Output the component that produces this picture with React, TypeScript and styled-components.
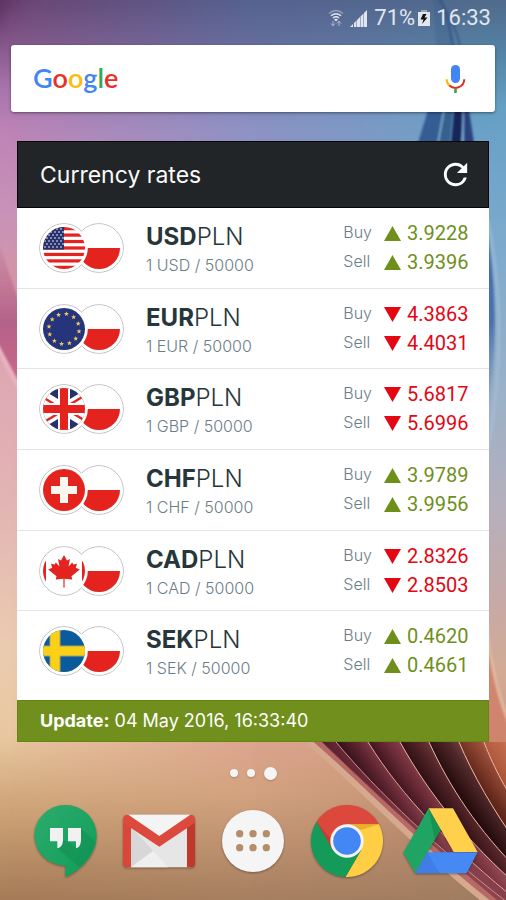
import React from "react";
import styled, { createGlobalStyle } from "styled-components";

const GlobalStyle = createGlobalStyle`
  *, *::before, *::after { box-sizing: border-box; }
  body { margin: 0; font-family: Inter, "Open Sans", sans-serif; }
  button { border: 0; padding: 0; background: none; cursor: pointer; }
  ul, dl, dd, h1, h2, p { margin: 0; padding: 0; }
`;

const GREEN = "#6f8f1b";
const RED = "#e30613";
const FLAG_RED = "#e5231e";

/* ---------- layout ---------- */

const Screen = styled.div`
  position: relative;
  z-index: 0;
  display: flex;
  flex-direction: column;
  min-height: 100vh;
  overflow: hidden;
  background: #e0b0a8;
`;

const WallpaperSvg = styled.svg`
  position: absolute;
  inset: 0;
  z-index: -1;
  width: 100%;
  height: 100%;
`;

const StatusBar = styled.header`
  display: flex;
  align-items: center;
  justify-content: flex-end;
  height: 36px;
  margin-bottom: 9px;
  padding-right: 15px;
  color: #e1e6ee;
  font: 22px/36px Roboto, sans-serif;
`;

const StatusIcon = styled.svg<{ $gap: number }>`
  display: block;
  flex: none;
  margin-right: ${(p) => p.$gap}px;
`;

const Percent = styled.span`
  margin-right: 3px;
`;

const SearchBar = styled.form`
  display: flex;
  align-items: center;
  height: 67px;
  margin: 0 11px 29px;
  padding: 0 27px 0 22px;
  border-radius: 3px;
  background: #fff;
  box-shadow: 0 1px 3px rgba(0, 0, 0, 0.45);
`;

const Logo = styled.label`
  padding-bottom: 2px;
  font: 600 27px/40px Lato, sans-serif;
`;

const LogoLetter = styled.span<{ $color: string }>`
  color: ${(p) => p.$color};
`;

const SearchInput = styled.input`
  flex: 1;
  min-width: 0;
  height: 40px;
  padding: 0 12px;
  border: 0;
  outline: 0;
  background: transparent;
  font: 18px/24px Roboto, sans-serif;
`;

const IconButton = styled.button`
  display: block;
  flex: none;
  svg { display: block; }
`;

const Widget = styled.main`
  display: flex;
  flex: 1;
  flex-direction: column;
  margin: 0 17px;
  background: #fff;
`;

const WidgetHeader = styled.div`
  display: flex;
  align-items: center;
  justify-content: space-between;
  height: 67px;
  padding: 0 15px 0 22px;
  border: 1px solid #050606;
  background: #212527;
`;

const WidgetTitle = styled.h1`
  color: #fafafa;
  font-size: 23px;
  font-weight: 400;
  line-height: 32px;
`;

const RateList = styled.ul`
  display: flex;
  flex: 1;
  flex-direction: column;
  padding-bottom: 8px;
  list-style: none;
`;

const RateRow = styled.li`
  display: flex;
  flex: 1;
  align-items: center;
  padding: 0 22px;
  border-bottom: 1px solid #e2e4e6;
  &:last-child { border-color: transparent; }
`;

const FlagPair = styled.svg`
  flex: none;
  margin-right: 21px;
`;

const PairInfo = styled.div`
  flex: 1;
  padding-top: 2px;
`;

const PairName = styled.h2`
  color: #26363a;
  font-size: 24px;
  font-weight: 300;
  line-height: 32px;
  strong { font-weight: 700; }
`;

const PairUnits = styled.p`
  color: #6b7d86;
  font-size: 16px;
  font-weight: 300;
  line-height: 24px;
`;

const Quotes = styled.dl`
  display: grid;
  grid-template-columns: auto 17px 60px;
  column-gap: 6px;
  align-items: center;
  line-height: 29px;
`;

const QuoteLabel = styled.dt`
  align-self: start;
  margin-right: 6px;
  color: #6b7d86;
  font-size: 16px;
  font-weight: 300;
  line-height: 27px;
`;

const QuoteValue = styled.dd<{ $up: boolean }>`
  color: ${(p) => (p.$up ? GREEN : RED)};
  font: 20px/29px Roboto, sans-serif;
`;

const UpdateBar = styled.footer`
  height: 42px;
  padding: 0 22px;
  border: 1px solid #658416;
  background: #708f1c;
  color: #fff;
  font-size: 18px;
  line-height: 40px;
  strong { font-weight: 700; }
`;

const Pager = styled.nav`
  display: flex;
  align-items: center;
  justify-content: center;
  gap: 9px;
  height: 62px;
  margin-bottom: -1px;
`;

const PageDot = styled.button<{ $active?: boolean }>`
  width: ${(p) => (p.$active ? 13 : 8)}px;
  height: ${(p) => (p.$active ? 13 : 8)}px;
  border-radius: 50%;
  background: #f5f5f5;
  box-shadow: 0 1px 2px rgba(0, 0, 0, 0.2);
`;

const Dock = styled.nav`
  display: grid;
  grid-template-columns: repeat(5, 1fr);
  justify-items: center;
  padding: 0 18px 21px;
`;

const AppIcon = styled.svg`
  filter: drop-shadow(0 1px 1px rgba(0, 0, 0, 0.35));
`;

/* ---------- wallpaper ---------- */

const BLADES = [
  { x: 322, d: "M322 742 C370 788 440 854 520 918", dark: "#4a1626", mid: "#6d2b3a", light: "#8d444c", edge: "#8a4048" },
  { x: 336, d: "M336 742 C376 790 440 852 520 912", dark: "#1d050b", mid: "#5c2330", light: "#86404b", edge: "#c98f86" },
  { x: 368, d: "M368 742 C402 797 452 848 520 903", dark: "#2a0a12", mid: "#6d2c38", light: "#8f454e", edge: "#dca79b" },
  { x: 400, d: "M400 742 C430 796 468 842 520 888", dark: "#22080c", mid: "#55262a", light: "#7c4546", edge: "#e6b5a8" },
  { x: 429, d: "M429 742 C450 788 478 830 520 872", dark: "#200809", mid: "#50282a", light: "#7d4c49", edge: "#e8b8aa" },
  { x: 459, d: "M459 742 C473 775 492 808 520 848", dark: "#5d2418", mid: "#984c38", light: "#c5795e", edge: "#eab9a4" },
  { x: 484, d: "M484 742 C490 758 500 780 520 812", dark: "#a85336", mid: "#c26d4e", light: "#d28464", edge: "#eab9a4" },
];

const Wallpaper = () => (
  <WallpaperSvg viewBox="0 0 506 900" preserveAspectRatio="none" aria-hidden="true">
    <defs>
      <linearGradient id="wpLeft" x1="0" y1="0" x2="0" y2="1">
        <stop offset="0" stopColor="#6b4473" />
        <stop offset="0.05" stopColor="#85588a" />
        <stop offset="0.1" stopColor="#a975ad" />
        <stop offset="0.15" stopColor="#be84b6" />
        <stop offset="0.24" stopColor="#c893b8" />
        <stop offset="0.31" stopColor="#d494a6" />
        <stop offset="0.42" stopColor="#dfa8b3" />
        <stop offset="0.56" stopColor="#e2b5b4" />
        <stop offset="0.72" stopColor="#ebcbb0" />
        <stop offset="0.82" stopColor="#e8c79f" />
        <stop offset="0.9" stopColor="#cda377" />
        <stop offset="1" stopColor="#a57b57" />
      </linearGradient>
      <linearGradient id="wpMid" x1="0" y1="0" x2="0" y2="1">
        <stop offset="0" stopColor="#55628f" />
        <stop offset="0.06" stopColor="#6870a0" />
        <stop offset="0.14" stopColor="#8c92c4" />
        <stop offset="0.5" stopColor="#c0a8bd" />
        <stop offset="0.82" stopColor="#dca490" />
        <stop offset="0.88" stopColor="#d3a27f" />
        <stop offset="1" stopColor="#a67f60" />
      </linearGradient>
      <linearGradient id="wpRight" x1="0" y1="0" x2="0" y2="1">
        <stop offset="0" stopColor="#506a8b" />
        <stop offset="0.06" stopColor="#5484a6" />
        <stop offset="0.12" stopColor="#669fc4" />
        <stop offset="0.25" stopColor="#79a9cd" />
        <stop offset="0.44" stopColor="#9bb1c8" />
        <stop offset="0.56" stopColor="#b5b0bc" />
        <stop offset="0.67" stopColor="#c7a9a6" />
        <stop offset="0.75" stopColor="#d3aa94" />
        <stop offset="0.86" stopColor="#c89478" />
        <stop offset="1" stopColor="#a07c60" />
      </linearGradient>
      <linearGradient id="wpFadeMid">
        <stop offset="0.02" stopColor="#000" />
        <stop offset="0.5" stopColor="#fff" />
      </linearGradient>
      <linearGradient id="wpFadeRight">
        <stop offset="0.5" stopColor="#000" />
        <stop offset="0.95" stopColor="#fff" />
      </linearGradient>
      <mask id="wpMaskMid"><rect width="506" height="900" fill="url(#wpFadeMid)" /></mask>
      <mask id="wpMaskRight"><rect width="506" height="900" fill="url(#wpFadeRight)" /></mask>
      <linearGradient id="wpPink" x1="0" y1="0" x2="0" y2="1">
        <stop offset="0" stopColor="#b4648c" stopOpacity="0" />
        <stop offset="0.55" stopColor="#b4628a" />
        <stop offset="1" stopColor="#cb6a88" />
      </linearGradient>
      <linearGradient id="wpBlue" x1="0" y1="0" x2="0" y2="1">
        <stop offset="0" stopColor="#4169a8" />
        <stop offset="0.5" stopColor="#4c72aa" />
        <stop offset="1" stopColor="#8fa6cc" stopOpacity="0.4" />
      </linearGradient>
      {BLADES.map((b, i) => (
        <linearGradient key={b.x} id={`wpBlade${i}`} gradientUnits="userSpaceOnUse" x1={b.x + 6} y1="765" x2={b.x + 38} y2="742">
          <stop offset="0" stopColor={b.dark} />
          <stop offset="0.6" stopColor={b.mid} />
          <stop offset="1" stopColor={b.light} />
        </linearGradient>
      ))}
      <filter id="wpSoft" x="-50%" y="-50%" width="200%" height="200%"><feGaussianBlur stdDeviation="9" /></filter>
      <filter id="wpFine" x="-50%" y="-50%" width="200%" height="200%"><feGaussianBlur stdDeviation="1" /></filter>
    </defs>
    <rect width="506" height="900" fill="url(#wpLeft)" />
    <rect width="506" height="900" fill="url(#wpMid)" mask="url(#wpMaskMid)" />
    <rect width="506" height="900" fill="url(#wpRight)" mask="url(#wpMaskRight)" />
    <path d="M-20 -20 H22 Q4 20 -20 45 Z" fill="#542a56" opacity="0.7" filter="url(#wpSoft)" />

    <path d="M-4 235 L22 310 V392 L-4 345 Z" fill="url(#wpPink)" filter="url(#wpFine)" />
    <path d="M-4 344 Q8 368 24 396" fill="none" stroke="#e9b2bf" strokeWidth="5" filter="url(#wpFine)" />

    <g filter="url(#wpFine)">
      <path d="M433 -4 H442 Q450 18 455 46 H436 Z" fill="#3b6089" opacity="0.4" />
      <path d="M439 -4 Q448 16 453 46 M443 6 Q456 26 460 46" fill="none" stroke="#2f4f83" strokeWidth="2" opacity="0.7" />
      <path d="M428 110 H443 L437 143 H418 Z" fill="#355c93" />
      <path d="M445 110 H453 L450 143 H439 Z" fill="#34618f" />
      <path d="M454 110 H463 L461 143 H451 Z" fill="#18265b" />
      <path d="M464 110 H469 L474 143 H464 Z" fill="#29427d" />
      <path d="M444 110 L438 143 M463 110 L463 143" stroke="#7ba8d0" strokeWidth="1" />
    </g>

    <path d="M486 225 Q503 320 487 420 Z" fill="url(#wpBlue)" filter="url(#wpFine)" />
    <path d="M488 220 Q510 330 488 450" fill="none" stroke="#a9c2dc" strokeWidth="3" opacity="0.5" filter="url(#wpFine)" />
    <path d="M486 625 Q494 690 512 730 V800 L484 742 Z" fill="#cf8068" opacity="0.85" />
    <path d="M486 625 Q494 690 512 730" fill="none" stroke="#e3b89f" strokeWidth="3" filter="url(#wpFine)" />

    <path d="M310 742 C360 785 430 855 504 912 H520 V742 Z" fill="#b56a66" />
    {BLADES.map((b, i) => (
      <path key={b.x} d={`${b.d} V742 Z`} fill={`url(#wpBlade${i})`} />
    ))}
    {BLADES.map((b) => (
      <path key={b.x} d={b.d} fill="none" stroke={b.edge} strokeWidth="1" />
    ))}
    <path d="M309 742 C360 785 425 855 500 912" fill="none" stroke="#d6a98e" strokeWidth="6" />
  </WallpaperSvg>
);

/* ---------- flags: 42-unit discs centred on the origin ---------- */

const star = (cx: number, cy: number, r: number) =>
  Array.from({ length: 10 }, (_, i) => {
    const a = (Math.PI / 5) * i - Math.PI / 2;
    const k = i % 2 ? r * 0.42 : r;
    return `${cx + k * Math.cos(a)},${cy + k * Math.sin(a)}`;
  }).join(" ");

const FLAGS: Record<string, React.ReactNode> = {
  USD: (
    <>
      <rect x="-21" y="-21" width="42" height="42" fill="#fff" />
      {[0, 1, 2, 3, 4, 5, 6].map((i) => (
        <rect key={i} x="-21" y={-21 + i * 6.46} width="42" height="3.23" fill={FLAG_RED} />
      ))}
      <rect x="-21" y="-21" width="21" height="22.6" fill="#26316e" />
      {[0, 1, 2, 3, 4, 5, 6].map((r) =>
        [0, 1, 2, 3, 4].map((c) => (
          <circle key={`${r}-${c}`} cx={-19 + c * 4 + (r % 2) * 2} cy={-19 + r * 3} r="0.8" fill="#fff" />
        ))
      )}
    </>
  ),
  EUR: (
    <>
      <rect x="-21" y="-21" width="42" height="42" fill="#26357b" />
      {Array.from({ length: 12 }, (_, i) => {
        const a = (Math.PI / 6) * i + 0.16;
        return <polygon key={i} points={star(15.2 * Math.cos(a), 15.2 * Math.sin(a), 2.6)} fill="#f3c95a" />;
      })}
    </>
  ),
  GBP: (
    <>
      <rect x="-21" y="-21" width="42" height="42" fill="#26316e" />
      <path d="M-30 -18 L30 18 M-30 18 L30 -18" stroke="#fff" strokeWidth="11" />
      <path d="M-30 -17 L0 1 M30 17 L0 -1 M-30 19 L0 1 M30 -19 L0 -1" stroke={FLAG_RED} strokeWidth="2.4" />
      <path d="M0 -21 V21 M-21 0 H21" stroke="#fff" strokeWidth="12" />
      <path d="M0 -21 V21 M-21 0 H21" stroke={FLAG_RED} strokeWidth="8" />
    </>
  ),
  CHF: (
    <>
      <rect x="-21" y="-21" width="42" height="42" fill={FLAG_RED} />
      <path d="M0 -13 V13 M-13 0 H13" stroke="#f8f6f0" strokeWidth="8" />
    </>
  ),
  CAD: (
    <>
      <rect x="-21" y="-21" width="42" height="42" fill="#fff" />
      <path d="M-21 -21 h3 v42 h-3 Z M18 -21 h3 v42 h-3 Z" fill={FLAG_RED} />
      <path
        d="M0 -16 L-3 -10.5 L-6 -12 L-4.5 -4.5 L-8.3 -8.5 L-9.3 -6.5 L-13 -7.2 L-11.8 -3.2 L-15.8 -1.5 L-7.5 5.3 L-8.3 8.5 L-0.6 7.8 V16.5 H0.6 V7.8 L8.3 8.5 L7.5 5.3 L15.8 -1.5 L11.8 -3.2 L13 -7.2 L9.3 -6.5 L8.3 -8.5 L4.5 -4.5 L6 -12 L3 -10.5 Z"
        fill={FLAG_RED}
      />
    </>
  ),
  SEK: (
    <>
      <rect x="-21" y="-21" width="42" height="42" fill="#0a5a9c" />
      <path d="M-9 -21 V21 M-21 0 H21" stroke="#a8a36a" strokeWidth="11" />
      <path d="M-9 -21 V21 M-21 0 H21" stroke="#fbd116" strokeWidth="9" />
    </>
  ),
};

const Flags = ({ code }: { code: string }) => (
  <FlagPair width="86" height="50" viewBox="-25 -25 86 50" role="img" aria-label={`${code} and PLN flags`}>
    <clipPath id={`disc-${code}`}><circle r="21" /></clipPath>
    <circle cx="35" r="24.3" fill="#fff" stroke="#bcbcbc" />
    <circle r="24.3" fill="#fff" stroke="#bcbcbc" />
    <circle cx="35" r="23.8" fill="#fff" />
    <path d="M14 0 H56 A21 21 0 0 1 14 0 Z" fill={FLAG_RED} />
    <circle r="23.8" fill="#fff" />
    <g clipPath={`url(#disc-${code})`}>{FLAGS[code]}</g>
  </FlagPair>
);

/* ---------- rates ---------- */

const RATES = [
  { code: "USD", buy: "3.9228", sell: "3.9396", up: true },
  { code: "EUR", buy: "4.3863", sell: "4.4031", up: false },
  { code: "GBP", buy: "5.6817", sell: "5.6996", up: false },
  { code: "CHF", buy: "3.9789", sell: "3.9956", up: true },
  { code: "CAD", buy: "2.8326", sell: "2.8503", up: false },
  { code: "SEK", buy: "0.4620", sell: "0.4661", up: true },
];

const Trend = ({ up }: { up: boolean }) => (
  <svg width="17" height="15" viewBox="0 0 17 15" aria-hidden="true">
    <path d={up ? "M8.5 0 L17 15 H0 Z" : "M0 0 H17 L8.5 15 Z"} fill={up ? GREEN : RED} />
  </svg>
);

const Quote = ({ label, value, up }: { label: string; value: string; up: boolean }) => (
  <>
    <QuoteLabel>{label}</QuoteLabel>
    <Trend up={up} />
    <QuoteValue $up={up}>{value}</QuoteValue>
  </>
);

const LOGO = [
  ["G", "#4285f4"],
  ["o", "#ea2f24"],
  ["o", "#fbbc05"],
  ["g", "#4285f4"],
  ["l", "#34a853"],
  ["e", "#ea2f24"],
];

export default function App() {
  return (
    <>
      <GlobalStyle />
      <Screen>
        <Wallpaper />
        <StatusBar>
          <StatusIcon $gap={6} width="16" height="18" viewBox="0 0 16 18" fill="none" stroke="#e1e6ee" strokeWidth="1.5">
            <path d="M1 4.5 Q8 -1.5 15 4.5" opacity="0.45" />
            <path d="M3 6.8 Q8 2.6 13 6.8 M5 9 Q8 6.5 11 9" />
            <path d="M6 10.6 Q8 9 10 10.6 L8 12.6 Z" fill="#e1e6ee" stroke="none" />
            <path d="M5 12 V16.5 M3 14.5 L5 16.8 L7 14.5 M11 17 V12.5 M9 14.5 L11 12.2 L13 14.5" strokeWidth="1" opacity="0.6" />
          </StatusIcon>
          <StatusIcon $gap={6} width="18" height="17" viewBox="0 0 18 17" fill="#e1e6ee">
            <path d="M0 17 L3 14 V17 Z M4 17 V13 L6.5 10.5 V17 Z M7 17 V10 L10 7 V17 Z M10.5 17 V6.5 L13.5 3.5 V17 Z M14 17 V3 L17 0 V17 Z" />
          </StatusIcon>
          <Percent>71%</Percent>
          <StatusIcon $gap={6} width="12" height="16" viewBox="0 0 12 16">
            <path d="M0 2 H12 V16 H0 Z" fill="#e1e6ee" />
            <path d="M3 0 H9 V2 H3 Z" fill="#9aa6b8" />
            <path d="M5 4 L2.5 9.5 H5.5 L4 14 L9.5 7.5 H6.5 L8.5 4 Z" fill="#101010" />
          </StatusIcon>
          <time>16:33</time>
        </StatusBar>

        <SearchBar role="search">
          <Logo htmlFor="search">
            {LOGO.map(([letter, color], i) => (
              <LogoLetter key={i} $color={color}>{letter}</LogoLetter>
            ))}
          </Logo>
          <SearchInput id="search" type="text" />
          <IconButton type="button" aria-label="Voice search">
            <svg width="24" height="30" viewBox="0 0 24 30" fill="none">
              <rect x="7" y="1" width="9" height="18" rx="4.5" fill="#4285f4" />
              <path d="M2.7 15.2 A9 9 0 0 0 5.5 21.8" stroke="#fbbc05" strokeWidth="2" />
              <path d="M5.3 21.6 A9 9 0 0 0 20.3 15.2" stroke="#e62a1c" strokeWidth="2" />
              <path d="M11.5 24.5 V29" stroke="#34a853" strokeWidth="2.6" />
            </svg>
          </IconButton>
        </SearchBar>

        <Widget>
          <WidgetHeader>
            <WidgetTitle>Currency rates</WidgetTitle>
            <IconButton type="button" aria-label="Refresh">
              <svg width="35" height="35" viewBox="0 0 24 24" fill="#fff">
                <path d="M17.65 6.35A7.958 7.958 0 0 0 12 4c-4.420 0-7.990 3.580-7.990 8s3.570 8 7.990 8c3.730 0 6.840-2.550 7.730-6h-2.080A5.990 5.990 0 0 1 12 18c-3.310 0-6-2.690-6-6s2.690-6 6-6c1.660 0 3.140.69 4.220 1.780L13 11h7V4l-2.350 2.350z" />
              </svg>
            </IconButton>
          </WidgetHeader>
          <RateList>
            {RATES.map((r) => (
              <RateRow key={r.code}>
                <Flags code={r.code} />
                <PairInfo>
                  <PairName><strong>{r.code}</strong>PLN</PairName>
                  <PairUnits>1 {r.code} / 50000</PairUnits>
                </PairInfo>
                <Quotes>
                  <Quote label="Buy" value={r.buy} up={r.up} />
                  <Quote label="Sell" value={r.sell} up={r.up} />
                </Quotes>
              </RateRow>
            ))}
          </RateList>
          <UpdateBar><strong>Update:</strong> 04 May 2016, 16:33:40</UpdateBar>
        </Widget>

        <Pager aria-label="Home screens">
          <PageDot aria-label="Screen 1" />
          <PageDot aria-label="Screen 2" />
          <PageDot aria-label="Screen 3" $active />
        </Pager>

        <Dock aria-label="Apps">
          <IconButton aria-label="Hangouts">
            <AppIcon width="76" height="76" viewBox="81 369 228 228">
              <defs>
                <linearGradient id="hangouts" x1="0" y1="0" x2="1" y2="1">
                  <stop offset="0" stopColor="#2dab6d" />
                  <stop offset="1" stopColor="#0f9d58" />
                </linearGradient>
              </defs>
              <path d="M196 375 A93 91 0 0 0 196 557 V591 C240 572 290 525 290 467 A93 92 0 0 0 196 375 Z" fill="url(#hangouts)" />
              <path d="M243 444 L287 486 Q275 530 237 562 L172 505 L189 482 L204 484 L229 505 Z" fill="#0a7d45" opacity="0.3" />
              <path d="M150 444 H189 V482 Q187 502 172 505 V484 H150 Z M204 444 H243 V482 Q241 502 228 505 V484 H204 Z" fill="#f1f1f1" />
            </AppIcon>
          </IconButton>
          <IconButton aria-label="Gmail">
            <AppIcon width="76" height="76" viewBox="363 369 228 228">
              <path d="M382 404 H573 V562 H382 Z" fill="#e6e6e6" />
              <path d="M393 562 L460 514 L393 440 Z" fill="#d7d7d7" />
              <path d="M393 562 L460 512 L504 562 Z" fill="#efefef" />
              <path d="M382 404 H573 L478 468 Z" fill="#f4f4f4" />
              <path d="M369 418 L393 440 V562 H381 Q369 562 369 550 Z" fill="#d9473a" />
              <path d="M585 418 L561 440 V562 H573 Q585 562 585 550 Z" fill="#c1382b" />
              <path d="M369 420 Q369 404 385 404 L478 468 L571 404 Q585 404 585 420 V428 L478 500 L369 428 Z" fill="#dc4a3e" />
            </AppIcon>
          </IconButton>
          <IconButton aria-label="All apps">
            <AppIcon width="76" height="76" viewBox="645 369 228 228">
              <circle cx="759" cy="483" r="93" fill="#f5f5f5" />
              {[719, 759, 799].map((x) =>
                [461, 503].map((y) => <circle key={`${x}-${y}`} cx={x} cy={y} r="11" fill="#b58d6a" />)
              )}
            </AppIcon>
          </IconButton>
          <IconButton aria-label="Chrome">
            <AppIcon width="76" height="76" viewBox="-38 -38 76 76">
              <path d="M-30.4 -19.3 A36 36 0 0 1 31.9 -16.7 H0 L0 0 L-14.5 8.4 Z" fill="#dc483b" />
              <path d="M31.9 -16.7 A36 36 0 0 1 -1.5 36 L14.5 8.4 L0 0 V-16.7 Z" fill="#ffce44" />
              <path d="M-1.5 36 A36 36 0 0 1 -30.4 -19.3 L-14.5 8.4 L0 0 L14.5 8.4 Z" fill="#149b59" />
              <path d="M0 -16.7 H31.9 L14 -11 Z" fill="#e0a51f" opacity="0.7" />
              <path d="M-30.4 -19.3 L-14.5 8.4 L-16.5 -3 Z" fill="#b23327" opacity="0.5" />
              <circle r="16.7" fill="#f3f3f3" />
              <circle r="13.8" fill="#4387f4" />
            </AppIcon>
          </IconButton>
          <IconButton aria-label="Drive">
            <AppIcon width="76" height="76" viewBox="450 369 228 228">
              <path d="M527 385 L564 448 L487 580 L451 518 Z" fill="#1fa463" />
              <path d="M527 385 L564 448 L545 480 Z" fill="#128a4e" opacity="0.7" />
              <path d="M527 385 H600 L674 516 H602 Z" fill="#ffd04b" />
              <path d="M523 517 H674 L641 580 H487 Z" fill="#4688f4" />
              <path d="M523 517 L560 580 H487 Z" fill="#3a70d6" opacity="0.45" />
            </AppIcon>
          </IconButton>
        </Dock>
      </Screen>
    </>
  );
}
